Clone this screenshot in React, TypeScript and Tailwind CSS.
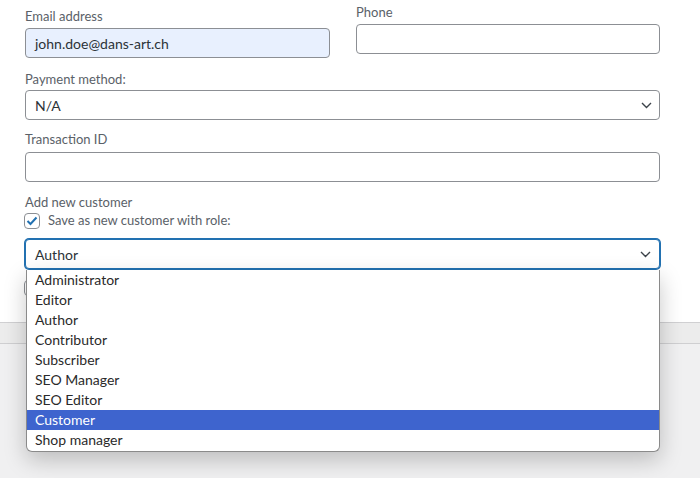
import React from 'react';

const roles = [
  'Administrator',
  'Editor',
  'Author',
  'Contributor',
  'Subscriber',
  'SEO Manager',
  'SEO Editor',
  'Customer',
  'Shop manager',
];

function Chevron() {
  return (
    <svg width="11" height="7" viewBox="0 0 11 7" className="shrink-0">
      <polyline points="1,1 5.5,5.5 10,1" fill="none" stroke="#3c434a" strokeWidth="1.4" />
    </svg>
  );
}

function Label({ children }: { children: React.ReactNode }) {
  return <div className="h-[18px] text-[13px] leading-[18px] text-[#5a6168]">{children}</div>;
}

export default function App() {
  return (
    <div
      className="relative w-[700px] h-[478px] overflow-hidden bg-[#f0f0f1]"
      style={{ fontFamily: '"Segoe UI", Lato, sans-serif' }}
    >
      {/* form panel */}
      <div className="h-[323px] bg-white border-b border-[#d0d0d2] pl-[25px] pr-[40px]">
        <div className="flex gap-[26px]">
          <div className="w-[305px] pt-[7px]">
            <Label>Email address</Label>
            <div className="mt-[3px] h-[30px] rounded-[4px] border border-[#8c8f94] bg-[#e8f0fe] px-[9px] flex items-center text-[14px] text-[#2c3338]">
              john.doe@dans-art.ch
            </div>
          </div>
          <div className="flex-1 pt-[3px]">
            <Label>Phone</Label>
            <div className="mt-[3px] h-[30px] rounded-[4px] border border-[#8c8f94] bg-white" />
          </div>
        </div>

        <div className="mt-[12px]">
          <Label>Payment method:</Label>
          <div className="mt-[2px] h-[30px] rounded-[4px] border border-[#8c8f94] bg-white pl-[9px] pr-[7px] flex items-center justify-between text-[14px] text-[#2c3338]">
            <span>N/A</span>
            <Chevron />
          </div>
        </div>

        <div className="mt-[10px]">
          <Label>Transaction ID</Label>
          <div className="mt-[4px] h-[30px] rounded-[4px] border border-[#8c8f94] bg-white" />
        </div>

        <div className="mt-[11px]">
          <Label>Add new customer</Label>
          <div className="mt-[1px] h-[18px] flex items-center gap-[8px] -ml-[1px]">
            <span className="w-[16px] h-[16px] rounded-[4px] border border-[#8c8f94] bg-white flex items-center justify-center">
              <svg width="12" height="10" viewBox="0 0 12 10">
                <polyline points="1.5,5 4.5,8 10.5,1.5" fill="none" stroke="#2271b1" strokeWidth="2" />
              </svg>
            </span>
            <span className="text-[13px] text-[#5a6168]">Save as new customer with role:</span>
          </div>
        </div>

        <div className="relative mt-[9px]">
          <div className="h-[30px] rounded-[4px] border border-[#2271b1] ring-1 ring-[#2271b1] bg-white pl-[9px] pr-[8px] flex items-center justify-between text-[14px] text-[#2c3338]">
            <span>Author</span>
            <Chevron />
          </div>
          <div className="mt-[11px] -ml-[1px] w-[16px] h-[16px] rounded-[4px] border border-[#8c8f94] bg-white" />

          {/* open dropdown list */}
          <div className="absolute left-[1px] top-[31px] w-[634px] bg-white border border-t-0 border-[#8a8a8a] rounded-b-[6px] shadow-[0_8px_22px_rgba(0,0,0,0.22)] z-10 pb-[1px]">
            {roles.map(role => (
              <div
                key={role}
                className={`h-[20px] pl-[8px] flex items-center text-[14px] leading-[20px] ${
                  role === 'Customer' ? 'bg-[#3e64ce] text-white' : 'text-[#2a2a2a]'
                }`}
              >
                {role}
              </div>
            ))}
          </div>
        </div>
      </div>

      {/* lower bar */}
      <div className="h-[21px] bg-[#ececec] border-b border-[#cfcfd1]" />
    </div>
  );
}
